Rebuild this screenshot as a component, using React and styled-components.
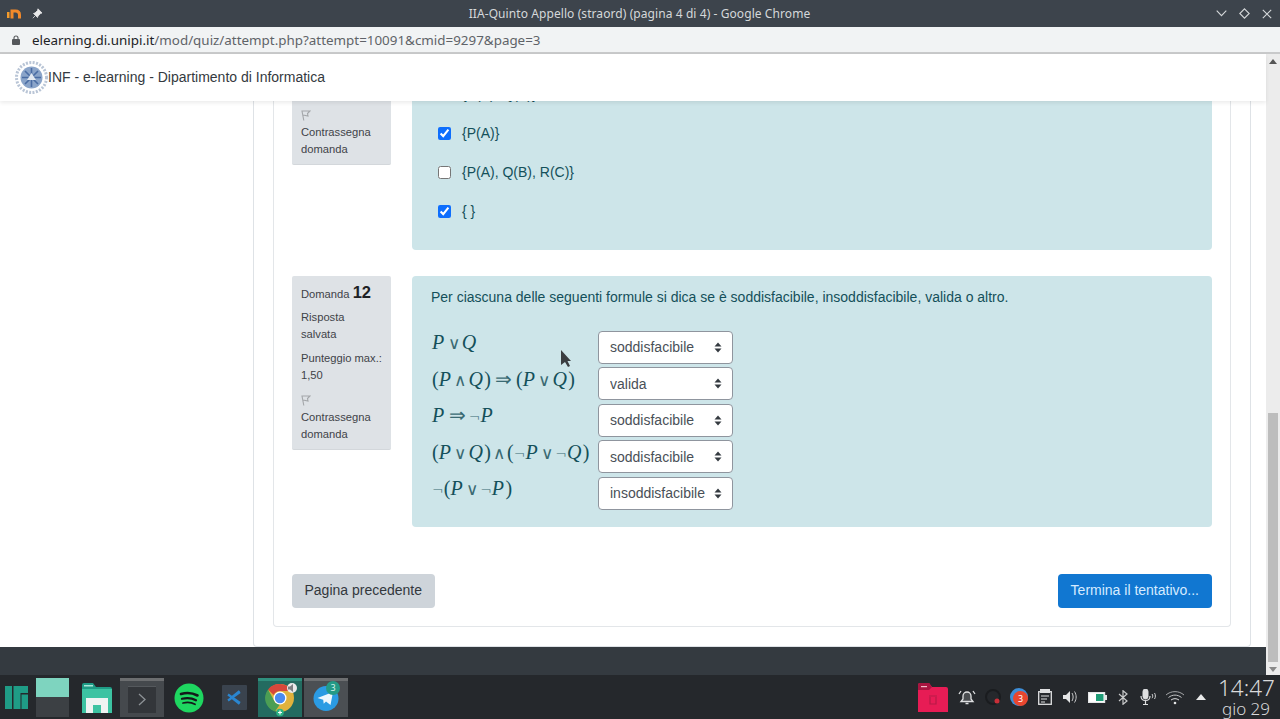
import React from "react";
import styled, { createGlobalStyle } from "styled-components";

const Global = createGlobalStyle`
  html, body { margin: 0; padding: 0; height: 719px; overflow: hidden; background: #fff; }
  body { font-family: "Liberation Sans", Arial, sans-serif; }
  * { box-sizing: border-box; }
`;

const Screen = styled.div`display:flex;flex-direction:column;width:1280px;height:719px;overflow:hidden;position:relative;`;
const TitleBar = styled.div`height:27px;flex:none;background:#3d444c;color:#d5d8da;display:flex;align-items:center;padding:0 0 0 7px;font:12px "Noto Sans",sans-serif;`;
const TitleIcons = styled.div`display:flex;align-items:center;gap:8px;width:120px;`;
const TitleText = styled.div`flex:1;text-align:center;margin-left:-120px;margin-right:-56px;letter-spacing:.08px;`;
const WinControls = styled.div`display:flex;align-items:center;gap:12px;width:64px;margin-left:auto;`;
const AddressBar = styled.div`height:27px;flex:none;background:#f1f3f4;border-bottom:2px solid #c8c9ca;display:flex;align-items:center;padding:0 0 0 12px;gap:12px;font:13.4px "Noto Sans",sans-serif;color:#202124;`;
const UrlRest = styled.span`color:#5f6368;`;
const Viewport = styled.div`flex:1;min-height:0;display:flex;`;
const Page = styled.div`flex:1;min-width:0;display:flex;flex-direction:column;`;
const Nav = styled.div`height:47px;flex:none;background:#fff;display:flex;align-items:center;padding:0 0 1px 15px;font-size:14px;color:#343a40;box-shadow:0 2px 4px rgba(0,0,0,.08);position:relative;z-index:2;`;
const Main = styled.div`flex:1;min-height:0;overflow:hidden;display:flex;flex-direction:column;justify-content:flex-end;padding-left:253px;`;
const Region = styled.div`width:998px;flex:none;border:1px solid #dee2e6;border-top:0;border-radius:0 0 4px 4px;padding:0 19px 19px;background:#fff;`;
const Card = styled.div`border:1px solid #e3e6e9;border-top:0;border-radius:0 0 4px 4px;padding:0 18px 18px;`;
const Question = styled.div`display:flex;align-items:flex-start;gap:21px;margin-bottom:${p => p.$mb}px;`;
const Info = styled.div`width:99px;flex:none;background:#dee2e6;border-radius:2px;border-bottom:1px solid #d3d7db;padding:${p => p.$top || 8}px 0 6px 9px;font-size:11.2px;line-height:17px;color:#3e4348;`;
const InfoPara = styled.div`margin-bottom:${p => p.$mb || 0}px;`;
const QNo = styled.b`font-size:16.5px;color:#1d2125;`;
const FlagLine = styled.div`height:17px;display:flex;align-items:center;`;
const Teal = styled.div`flex:1;background:#cde5e9;border-radius:4px;color:#14505a;font-size:14px;padding:${p => p.$pad};`;
const Opt = styled.label`display:flex;align-items:center;height:39px;gap:11px;`;
const Check = styled.input`width:13px;height:13px;margin:1px 0 0;accent-color:#0d6efd;flex:none;`;
const Prompt = styled.div`line-height:22px;margin-bottom:22.5px;`;
const MathGrid = styled.div`display:grid;grid-template-columns:167px 135px;row-gap:3.5px;`;
const Formula = styled.div`font:20px/22px "Liberation Serif","DejaVu Serif",serif;color:#14505a;align-self:start;white-space:nowrap;padding:.5px 0 0 1px;`;
const V = styled.i`margin:0 1.5px 0 0;`;
const Op = styled.span`font-size:${p => p.$size || 17}px;margin:0 ${p => p.$m ?? 2}px;font-family:"DejaVu Sans",sans-serif;font-weight:300;color:#3a6a73;`;
const SelectWrap = styled.div`position:relative;height:33px;`;
const Sel = styled.select`width:100%;height:100%;appearance:none;border:1px solid #8f959e;border-radius:4px;background:#fff;color:#495057;font:14px "Liberation Sans",sans-serif;padding:0 0 0 11px;`;
const Arrows = styled.svg`position:absolute;right:11px;top:11px;pointer-events:none;`;
const Buttons = styled.div`display:flex;justify-content:space-between;`;
const Btn = styled.div`height:34px;padding:0 ${p => p.$primary ? 13 : 12.5}px 2px;border-radius:4px;display:flex;align-items:center;font-size:14px;background:${p => p.$primary ? "#1177d1" : "#ced4da"};color:${p => p.$primary ? "#d6ebff" : "#33383d"};`;
const Footer = styled.div`height:28px;flex:none;background:#343a40;`;
const Scrollbar = styled.div`width:14px;flex:none;background:#ececec;display:flex;flex-direction:column;align-items:center;padding-top:5px;`;
const ThumbSpace = styled.div`flex:1;display:flex;align-items:flex-end;width:100%;justify-content:center;padding-top:4px;`;
const Thumb = styled.div`width:10px;height:249px;background:#bdbdbd;`;
const Taskbar = styled.div`height:44px;flex:none;background:#25282c;display:flex;padding-left:5px;`;
const Slot = styled.div`width:${p => p.$w}px;margin:3px 0 2px ${p => p.$ml || 0}px;background:${p => p.$bg || "transparent"};border-top:${p => p.$top ? `3px solid ${p.$top}` : "0"};display:flex;align-items:center;justify-content:center;flex:none;`;
const Tray = styled.div`margin-left:auto;display:flex;align-items:center;padding-right:6px;`;
const TrayItem = styled.div`width:${p => p.$w || 26}px;display:flex;justify-content:center;align-items:center;flex:none;`;
const Clock = styled.div`width:56px;margin-left:4px;text-align:center;color:#d9dadb;font-family:"Noto Sans",sans-serif;font-weight:300;`;
const ClockTime = styled.div`font-size:22.5px;line-height:23px;`;
const ClockDate = styled.div`font-size:17px;line-height:19px;`;
const Cursor = styled.svg`position:absolute;left:560px;top:349px;`;

const Flag = () => (
  <svg width="10" height="11" viewBox="0 0 10 11"><path d="M2.800 10.500 1 1h8L6.500 3.500 7 6 2 5" fill="none" stroke="#a3a6a9" strokeWidth="1.100"/></svg>
);
const UpDown = () => (
  <Arrows width="8" height="11" viewBox="0 0 8 11"><path d="M4 .5 7.500 4.500H.5zM4 10.500.5 6.500h7z" fill="#343a40"/></Arrows>
);
const Pick = ({ v }) => (
  <SelectWrap>
    <Sel defaultValue={v}>
      <option>soddisfacibile</option><option>insoddisfacibile</option><option>valida</option><option>altro</option>
    </Sel>
    <UpDown />
  </SelectWrap>
);
const Seal = () => (
  <svg width="33" height="33" viewBox="0 0 33 33">
    <circle cx="16.500" cy="16.500" r="15" fill="none" stroke="#b9c5d6" strokeWidth="3" strokeDasharray="2 1.400"/>
    <circle cx="16.500" cy="16.500" r="11" fill="#8aa4c9"/>
    <path d="M16.500 7v19M7 16.500h19M10 10l13 13M23 10 10 23" stroke="#4a6ca3" strokeWidth="1.600"/>
    <path d="m16.500 12 4.500 7h-9z" fill="#e3e9f1"/>
  </svg>
);
const Manjaro = () => (
  <svg width="23" height="23" viewBox="0 0 23 23" fill="#1f9c86"><path d="M0 0h7v23H0zM8.500 0H23v7h-7.500v16H8.500zM16.500 8.500H23V23h-6.500z"/></svg>
);
const Pager = () => (
  <svg width="33" height="39" viewBox="0 0 33 39"><rect width="33" height="19" fill="#7ed4bf"/><rect y="19" width="33" height="20" fill="#3c4044"/></svg>
);
const FolderIcon = () => (
  <svg width="32" height="33" viewBox="0 0 32 33">
    <path d="M1 4a2 2 0 0 1 2-2h9l3 4h14a2 2 0 0 1 2 2v23H1z" fill="#1f9c86"/>
    <rect x="1" y="8" width="30" height="24" fill="#3cc3a2"/>
    <path d="M5 17h22v15h-7v-8h-8v8H5z" fill="#eef3f2"/>
    <rect x="3" y="4" width="9" height="1.500" fill="#a9e6d8"/>
  </svg>
);
const Terminal = () => (
  <svg width="28" height="27" viewBox="0 0 28 27"><rect width="28" height="27" fill="#33363a"/><rect width="28" height="1" fill="#55595d"/><path d="m11 8 6 5.500-6 5.500" fill="none" stroke="#8d9296" strokeWidth="1.300"/></svg>
);
const Spotify = () => (
  <svg width="30" height="30" viewBox="0 0 30 30"><circle cx="15" cy="15" r="14.500" fill="#1ed760"/><g fill="none" stroke="#14191a" strokeLinecap="round"><path d="M7 11c5.500-1.700 11.500-1.200 16.500 1.500" strokeWidth="2.600"/><path d="M8 15.800c4.800-1.300 10-.8 14 1.500" strokeWidth="2.200"/><path d="M9 20c4-1 8.500-.7 12 1.200" strokeWidth="1.800"/></g></svg>
);
const VSCode = () => (
  <svg width="25" height="25" viewBox="0 0 25 25"><rect width="25" height="25" rx="1" fill="#3a434e"/><path d="M17.500 6 9.500 12.500l8 6.500M6 9.500l12 8.500M6 15.500l12-8.500" fill="none" stroke="#2a86d0" strokeWidth="2.200"/></svg>
);
const Chrome = () => (
  <svg width="34" height="36" viewBox="0 0 34 36">
    <circle cx="17" cy="17" r="14" fill="#e0b23c"/>
    <path d="M17 3a14 14 0 0 1 12.100 7H17a7 7 0 0 0-6.300 4L5 8.500A14 14 0 0 1 17 3z" fill="#d6473b"/>
    <path d="M5 8.500 10.800 19a7 7 0 0 0 6 4.500L12 30.500A14 14 0 0 1 5 8.500z" fill="#4b9e54"/>
    <circle cx="17" cy="17" r="6.500" fill="#fff"/><circle cx="17" cy="17" r="5.200" fill="#4a8bef"/>
    <circle cx="29" cy="7" r="5" fill="#eaeaea"/><path d="M25 5.500h2l3-2.500v8l-3-2.500h-2z" fill="#7d7f81"/>
    <circle cx="17" cy="31.500" r="3.800" fill="#2bb484"/><path d="M17 29.500v4M15 31.500h4" stroke="#fff" strokeWidth="1.200"/>
  </svg>
);
const Telegram = () => (
  <svg width="38" height="36" viewBox="0 0 38 36">
    <circle cx="19" cy="17.500" r="12.500" fill="#2b9be3"/>
    <path d="m10.500 17 15.500-6-2.500 13-4.500-3.500-2.300 2.200-.5-4z" fill="#eef7fd"/>
    <circle cx="26" cy="7" r="7" fill="#249a86"/>
    <text x="26" y="10" textAnchor="middle" fontSize="9" fill="#d8f3ec" fontFamily="Noto Sans">3</text>
  </svg>
);
const RedFolder = () => (
  <svg width="30" height="29" viewBox="0 0 30 29">
    <path d="M0 2a2 2 0 0 1 2-2h9l3 4h14a2 2 0 0 1 2 2v23H0z" fill="#e71c55"/>
    <path d="M0 2a2 2 0 0 1 2-2h9l3 4-3 3H0z" fill="#a81540"/>
    <rect x="3" y="3" width="6" height="1.200" fill="#f4b7c6"/>
    <path d="M11 13h8M12 14v7h6v-7" fill="none" stroke="#b81a48" strokeWidth="1.200"/>
  </svg>
);
const Bell = () => (
  <svg width="18" height="18" viewBox="0 0 18 18" fill="none" stroke="#dfe0e1" strokeWidth="1.300"><path d="M5 11V8a4 4 0 0 1 8 0v3l2 2.500H3z" fill="#dfe0e1" fillOpacity=".2"/><path d="M7.500 15.500h3M1 6l2-3M17 6l-2-3"/></svg>
);
const DotIcon = () => (
  <svg width="16" height="18" viewBox="0 0 16 18"><circle cx="8" cy="9" r="7" fill="none" stroke="#1a1c1f" strokeWidth="2"/><circle cx="12" cy="13" r="2.500" fill="#c92f38"/></svg>
);
const Badge = () => (
  <svg width="18" height="18" viewBox="0 0 18 18"><circle cx="9" cy="9" r="9" fill="#3d8ed8"/><circle cx="10.500" cy="10.500" r="7.500" fill="#e8462f"/><text x="10.500" y="14" fontSize="9" textAnchor="middle" fill="#fff" fontFamily="Noto Sans">3</text></svg>
);
const Clip = () => (
  <svg width="14" height="16" viewBox="0 0 14 16"><rect x=".7" y="2.700" width="12.600" height="12.600" fill="none" stroke="#dfe0e1" strokeWidth="1.300"/><rect x="2" y="0" width="10" height="4" fill="#dfe0e1"/><path d="M3 7h8M3 10h6M3 13h4" stroke="#dfe0e1"/></svg>
);
const Speaker = () => (
  <svg width="16" height="14" viewBox="0 0 16 14"><path d="M0 5h3l4-4v12L3 9H0z" fill="#e4e5e6"/><path d="M9 3c1.500 2.500 1.500 5.500 0 8M11.500 1.500c2.200 3.500 2.200 7.500 0 11" fill="none" stroke="#c8c9ca" strokeWidth="1"/></svg>
);
const Battery = () => (
  <svg width="19" height="11" viewBox="0 0 19 11"><rect x=".6" y=".6" width="16" height="9.800" fill="#fff" stroke="#e4e5e6" strokeWidth="1.200"/><rect x="17" y="3" width="2" height="5" fill="#e4e5e6"/><rect x="8" y="2" width="7.500" height="7" fill="#1f9c76"/></svg>
);
const Bluetooth = () => (
  <svg width="10" height="15" viewBox="0 0 10 15"><path d="m1 4 8 7-4 3.300V.7L9 4l-8 7" fill="none" stroke="#c9cacb" strokeWidth="1.200"/></svg>
);
const Mic = () => (
  <svg width="18" height="16" viewBox="0 0 18 16" fill="none" stroke="#dfe0e1"><rect x="3" y="0" width="5" height="10" rx="2.500" fill="#dfe0e1"/><path d="M1 7c0 6 9 6 9 0M5.500 12v3M3 15.500h5" strokeWidth="1.200"/><path d="M12 5c1 1.300 1 3 0 4.200M14.500 4c1.200 2 1.200 4 0 6" strokeWidth=".9"/></svg>
);
const Wifi = () => (
  <svg width="20" height="15" viewBox="0 0 20 15" fill="none" stroke="#a3a5a7" strokeWidth="1"><path d="M1 5c5-4.500 13-4.500 18 0"/><path d="M3.500 7.500c4-3.200 9-3.200 13 0" stroke="#c4c5c6"/><path d="M6 10c2.500-1.800 5.500-1.800 8 0" stroke="#d9dadb"/><circle cx="10" cy="13" r="1.300" fill="#e4e5e6" stroke="none"/></svg>
);
const TrayArrow = () => (
  <svg width="10" height="6" viewBox="0 0 10 6"><path d="M5 0l5 6H0z" fill="#e9eaea"/></svg>
);
const Neg = () => <Op $size={14} $m={0}>¬</Op>;
const Arrow = ({ m }) => <Op $size={20} $m={m}>⇒</Op>;

export default function App() {
  return (
    <Screen>
      <Global />
      <TitleBar>
        <TitleIcons>
          <svg width="17" height="11" viewBox="0 0 17 11"><rect x="0" y="4" width="2.500" height="6" fill="#f49b2b"/><path d="M5 10.500V3h3.500c3 0 4 1.500 4 4v3.500" fill="none" stroke="#f2892a" strokeWidth="3"/></svg>
          <svg width="11" height="11" viewBox="0 0 11 11"><path d="M6 .8 10 5 8.500 5.600 6 8 5.500 9.500 1.500 5.500 3 5l2.500-2.500zM3 8 .8 10.200" fill="#e8e9ea" stroke="#e8e9ea" strokeWidth=".8"/></svg>
        </TitleIcons>
        <TitleText>IIA-Quinto Appello (straord) (pagina 4 di 4) - Google Chrome</TitleText>
        <WinControls>
          <svg width="11" height="7" viewBox="0 0 11 7"><path d="m.7.7 4.800 5 4.800-5" fill="none" stroke="#d5d8da" strokeWidth="1.100"/></svg>
          <svg width="11" height="11" viewBox="0 0 11 11"><path d="M5.500.8 10.200 5.500 5.500 10.200.8 5.500z" fill="none" stroke="#d5d8da" strokeWidth="1.100"/></svg>
          <svg width="10" height="10" viewBox="0 0 10 10"><path d="m.8.8 8.400 8.400M9.200.8.800 9.200" stroke="#d5d8da" strokeWidth="1.100"/></svg>
        </WinControls>
      </TitleBar>
      <AddressBar>
        <svg width="8" height="10" viewBox="0 0 8 10"><rect y="4" width="8" height="6" rx="1" fill="#55585b"/><path d="M2 4.500V3a2 2 0 0 1 4 0v1.500" fill="none" stroke="#55585b" strokeWidth="1.100"/></svg>
        <span>elearning.di.unipi.it<UrlRest>/mod/quiz/attempt.php?attempt=10091&amp;cmid=9297&amp;page=3</UrlRest></span>
      </AddressBar>
      <Viewport>
        <Page>
          <Nav><Seal />INF - e-learning - Dipartimento di Informatica</Nav>
          <Main>
            <Region>
              <Card>
                <Question $mb={26}>
                  <Info $top={43}>
                    <FlagLine><Flag /></FlagLine>
                    <InfoPara>Contrassegna<br />domanda</InfoPara>
                  </Info>
                  <Teal $pad="10px 19px 20px 26px">
                    <Opt><Check type="checkbox" /><span>{"{P(A), Q(B)}"}</span></Opt>
                    <Opt><Check type="checkbox" defaultChecked /><span>{"{P(A)}"}</span></Opt>
                    <Opt><Check type="checkbox" /><span>{"{P(A), Q(B), R(C)}"}</span></Opt>
                    <Opt><Check type="checkbox" defaultChecked /><span>{"{ }"}</span></Opt>
                  </Teal>
                </Question>
                <Question $mb={47}>
                  <Info>
                    <InfoPara $mb={6}>Domanda <QNo>12</QNo></InfoPara>
                    <InfoPara $mb={7}>Risposta<br />salvata</InfoPara>
                    <InfoPara $mb={8}>Punteggio max.:<br />1,50</InfoPara>
                    <FlagLine><Flag /></FlagLine>
                    <InfoPara>Contrassegna<br />domanda</InfoPara>
                  </Info>
                  <Teal $pad="10px 19px 17.5px 19px">
                    <Prompt>Per ciascuna delle seguenti formule si dica se è soddisfacibile, insoddisfacibile, valida o altro.</Prompt>
                    <MathGrid>
                      <Formula><V>P</V><Op>∨</Op><V>Q</V></Formula>
                      <Pick v="soddisfacibile" />
                      <Formula>(<V>P</V><Op>∧</Op><V>Q</V>)<Arrow m={4} />(<V>P</V><Op>∨</Op><V>Q</V>)</Formula>
                      <Pick v="valida" />
                      <Formula><V>P</V><Arrow m={3} /><Neg /><V>P</V></Formula>
                      <Pick v="soddisfacibile" />
                      <Formula>(<V>P</V><Op>∨</Op><V>Q</V>)<Op>∧</Op>(<Neg /><V>P</V><Op>∨</Op><Neg /><V>Q</V>)</Formula>
                      <Pick v="soddisfacibile" />
                      <Formula><Neg />(<V>P</V><Op>∨</Op><Neg /><V>P</V>)</Formula>
                      <Pick v="insoddisfacibile" />
                    </MathGrid>
                  </Teal>
                </Question>
                <Buttons>
                  <Btn>Pagina precedente</Btn>
                  <Btn $primary>Termina il tentativo...</Btn>
                </Buttons>
              </Card>
            </Region>
          </Main>
          <Footer />
        </Page>
        <Scrollbar>
          <svg width="8" height="5" viewBox="0 0 8 5"><path d="M4 0l4 5H0z" fill="#555"/></svg>
          <ThumbSpace><Thumb /></ThumbSpace>
          <svg width="8" height="13" viewBox="0 0 8 13"><path d="M0 5h8L4 10z" fill="#8a8a8a"/></svg>
        </Scrollbar>
      </Viewport>
      <Taskbar>
        <Slot $w={23}><Manjaro /></Slot>
        <Slot $w={33} $ml={8}><Pager /></Slot>
        <Slot $w={32} $ml={12}><FolderIcon /></Slot>
        <Slot $w={44} $ml={7} $bg="#45494d" $top="#6c6e70"><Terminal /></Slot>
        <Slot $w={30} $ml={10}><Spotify /></Slot>
        <Slot $w={25} $ml={18}><VSCode /></Slot>
        <Slot $w={44} $ml={11} $bg="#236b60" $top="#2f8f7d"><Chrome /></Slot>
        <Slot $w={44} $ml={2} $bg="#4b4f53" $top="#6c6e70"><Telegram /></Slot>
        <Tray>
          <TrayItem $w={42}><RedFolder /></TrayItem>
          <TrayItem><Bell /></TrayItem>
          <TrayItem><DotIcon /></TrayItem>
          <TrayItem><Badge /></TrayItem>
          <TrayItem><Clip /></TrayItem>
          <TrayItem><Speaker /></TrayItem>
          <TrayItem><Battery /></TrayItem>
          <TrayItem><Bluetooth /></TrayItem>
          <TrayItem><Mic /></TrayItem>
          <TrayItem><Wifi /></TrayItem>
          <TrayItem><TrayArrow /></TrayItem>
          <Clock><ClockTime>14:47</ClockTime><ClockDate>gio 29</ClockDate></Clock>
        </Tray>
      </Taskbar>
      <Cursor width="12" height="19" viewBox="0 0 12 19"><path d="M1 1v15l4-3 3 5 2-1-2.500-5H11z" fill="#3a3d40"/></Cursor>
    </Screen>
  );
}
